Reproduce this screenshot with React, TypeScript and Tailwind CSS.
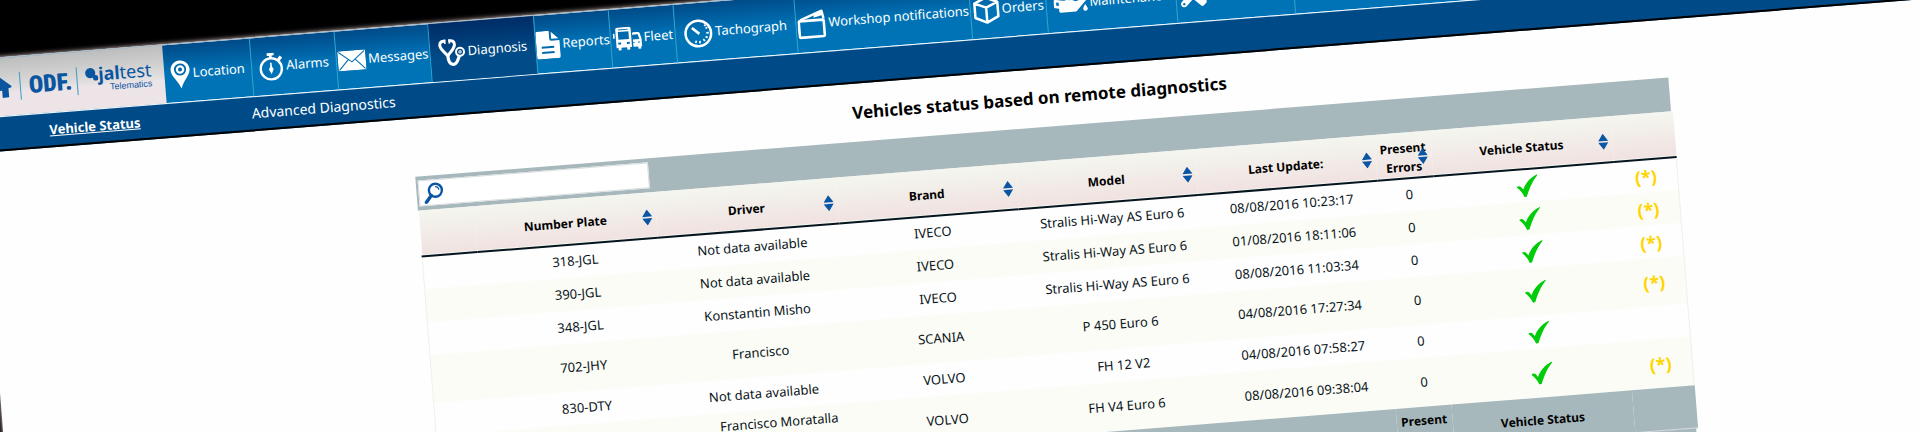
import type { ReactNode } from "react";
import { FaOilCan, FaTools } from "react-icons/fa";

type NavItem = { label: string; width: string; icon: ReactNode; active?: boolean; iconOnly?: boolean };

const PinIcon = () => (
  <svg width="20" height="29" viewBox="0 0 20 29" fill="none">
    <path d="M10 .5C4.6.5.5 4.600.5 9.800c0 5.800 6 9.700 9.500 18.700 3.500-9 9.500-12.900 9.500-18.700C19.500 4.600 15.400.5 10 .5z" fill="#fff" />
    <circle cx="10" cy="9.500" r="5.200" stroke="#0069ac" strokeWidth="1.800" />
    <circle cx="10" cy="9.500" r="2" fill="#0069ac" />
  </svg>
);

const StopwatchIcon = () => (
  <svg width="25" height="28" viewBox="0 0 25 28" fill="none" stroke="#fff">
    <circle cx="12" cy="16" r="10.600" strokeWidth="2.400" />
    <path d="M8.500 1.500h7M12 1.500v4" strokeWidth="2.600" />
    <path d="M19.500 8l3-3.500" strokeWidth="3.200" />
    <path d="M12 10v5" strokeWidth="1.600" />
    <path d="M12 12.500l2.400 4-2.400 5-2.400-5z" fill="#fff" stroke="none" />
  </svg>
);

const EnvelopeIcon = () => (
  <svg width="28" height="20" viewBox="0 0 28 20" fill="none">
    <rect width="28" height="20" rx="1.500" fill="#fff" />
    <path d="M1 1l13 10.500L27 1M1 19l9.500-10M27 19L17.500 9" stroke="#0072b5" strokeWidth="1.100" />
  </svg>
);

const StethoscopeIcon = () => (
  <svg width="27" height="28" viewBox="0 0 27 28" fill="none" stroke="#fff">
    <path d="M7.500 2.500C4 1.500 1.800 3 1.800 6c0 4 3.700 6.500 7.200 11 3.800-4.500 7.500-7 7.500-11 0-3-2.200-4.500-5.700-3.500" strokeWidth="3" />
    <path d="M7 .5v4.500M11.500.5v4.500" strokeWidth="1.600" />
    <path d="M9 16c0 6.500 1.500 10 5 10 4.500 0 4.500-5.500 7-8.500" strokeWidth="3.200" />
    <circle cx="21.500" cy="14" r="4" strokeWidth="2" />
    <circle cx="21.500" cy="14" r="1.200" strokeWidth="1" />
  </svg>
);

const ReportIcon = () => (
  <svg width="24" height="28" viewBox="0 0 25 29" fill="none">
    <path d="M2 0h12v8.500a2 2 0 0 0 2 2h8.500V27a2 2 0 0 1-2 2H2a2 2 0 0 1-2-2V2a2 2 0 0 1 2-2z" fill="#fff" />
    <path d="M16 1l7.500 7.500H16z" fill="#fff" />
    <path d="M5.500 17h13M5.500 22.500h13" stroke="#0069ac" strokeWidth="2.200" />
  </svg>
);

const FleetIcon = () => (
  <svg width="29" height="24" viewBox="0 0 30 24" fill="none">
    <path d="M5 0h12a2 2 0 0 1 2 2v19h-2v2.500h-3V21H8v2.500H5V21H3V2a2 2 0 0 1 2-2z" fill="#fff" />
    <path d="M1 6v5M21 7v3" stroke="#fff" strokeWidth="1.800" />
    <path d="M5.500 4.500h11v8h-11z" fill="#0069ac" />
    <path d="M6 2.300h10" stroke="#0069ac" strokeWidth="1" />
    <path d="M5 16.500h3M14 16.500h3" stroke="#0069ac" strokeWidth="2" />
    <path d="M20.500 6h5.500a2 2 0 0 1 2 1.500l1.500 5.500v8h-1v2.500h-3V21h-5z" fill="#fff" />
    <path d="M20.500 9h5l1 4h-6zM20.500 16.500h1.500M25.500 16.500h2" fill="#0069ac" stroke="#0069ac" strokeWidth="1" />
  </svg>
);

const TachographIcon = () => (
  <svg width="29" height="29" viewBox="0 0 29 29" fill="none" stroke="#fff">
    <circle cx="14.500" cy="14.500" r="12.800" strokeWidth="2.500" />
    <path d="M8.500 8.500l7 6.500" strokeWidth="2.600" />
    <path d="M22 10l2-1M22.500 14.500H25M21.500 18l2 1.200M19 20.500l1.500 2M15.500 22v2.500M12 21.500l-.8 2.300M21 7.500l1.300-1.200" strokeWidth="1.700" />
  </svg>
);

const WorkshopIcon = () => (
  <svg width="29" height="29" viewBox="0 0 29 29" fill="none" stroke="#fff">
    <rect x="1.500" y="10.500" width="25" height="16.500" rx="1" strokeWidth="2.600" />
    <path d="M3 9.500L25 1.500l1.500 8" strokeWidth="2.400" strokeLinejoin="round" />
    <path d="M17 5l8-3 .5 4-9 2z" fill="#fff" stroke="none" />
  </svg>
);

const BoxIcon = () => (
  <svg width="27" height="28" viewBox="0 0 27 28" fill="none" stroke="#fff" strokeWidth="2.500" strokeLinejoin="round">
    <path d="M13.500 1.500L25 6.500v14.500l-11.500 5.500L2 21V6.500zM2 6.500l11.500 5L25 6.500M13.500 11.500v15" />
  </svg>
);

const HomeIcon = () => (
  <svg width="26" height="22" viewBox="0 0 26 24" preserveAspectRatio="none" fill="#0a55a0">
    <path d="M13 0l13 12-1.500 1.500H22.500V24h-6.500v-8h-6v8H3.500V13.500H1.500L0 12z" />
  </svg>
);

const SearchIcon = () => (
  <svg width="20" height="21" viewBox="0 0 20 21" fill="none" stroke="#0b55a5">
    <circle cx="12" cy="8" r="6.500" strokeWidth="2.400" />
    <path d="M7.500 13L2 19.500" strokeWidth="3.400" strokeLinecap="round" />
    <path d="M12 4.500c2 0 3.300 1.300 3.500 3.300" strokeWidth="1.300" />
  </svg>
);

const SortIcon = () => (
  <svg width="10" height="16" viewBox="0 0 10 16" fill="#0b55a5">
    <path d="M5 0l5 7.200H0zM0 8.800h10L5 16z" />
  </svg>
);

const CheckIcon = () => (
  <svg width="22" height="22" viewBox="0 0 22 22" fill="#00cc0a" role="img" aria-label="OK">
    <path d="M0 11.500c1.800-1.400 3.600-1.200 4.600.2l1.900 2.600C9.300 8 14 3 21.500 0l.3.800C16.800 6 13 12.500 9.600 21.600L7.300 22C5.500 17.500 3.300 14 0 11.500z" />
  </svg>
);

const navItems: NavItem[] = [
  { label: "Location", width: "w-[88px]", icon: <PinIcon /> },
  { label: "Alarms", width: "w-[85px]", icon: <StopwatchIcon /> },
  { label: "Messages", width: "w-[94px]", icon: <EnvelopeIcon /> },
  { label: "Diagnosis", width: "w-[106px]", icon: <StethoscopeIcon />, active: true },
  { label: "Reports", width: "w-[75px]", icon: <ReportIcon /> },
  { label: "Fleet", width: "w-[65px]", icon: <FleetIcon /> },
  { label: "Tachograph", width: "w-[121px]", icon: <TachographIcon /> },
  { label: "Workshop notifications", width: "w-[175px]", icon: <WorkshopIcon /> },
  { label: "Orders", width: "w-[76px]", icon: <BoxIcon /> },
  { label: "Maintenance", width: "w-[130px]", icon: <FaOilCan size={34} /> },
  { label: "Tools", width: "w-[118px]", icon: <FaTools size={26} />, iconOnly: true },
];

type Vehicle = {
  plate: string;
  driver: string;
  brand: string;
  model: string;
  updated: string;
  note: boolean;
  height: string;
  driverCell?: string;
};

const vehicles: Vehicle[] = [
  { plate: "318-JGL", driver: "Not data available", brand: "IVECO", model: "Stralis Hi-Way AS Euro 6", updated: "08/08/2016 10:23:17", note: true, height: "h-[33px]" },
  { plate: "390-JGL", driver: "Not data available", brand: "IVECO", model: "Stralis Hi-Way AS Euro 6", updated: "01/08/2016 18:11:06", note: true, height: "h-[33px]" },
  { plate: "348-JGL", driver: "Konstantin Misho", brand: "IVECO", model: "Stralis Hi-Way AS Euro 6", updated: "08/08/2016 11:03:34", note: true, height: "h-[33px]" },
  { plate: "702-JHY", driver: "Francisco", brand: "SCANIA", model: "P 450 Euro 6", updated: "04/08/2016 17:27:34", note: true, height: "h-[48px]" },
  { plate: "830-DTY", driver: "Not data available", brand: "VOLVO", model: "FH 12 V2", updated: "04/08/2016 07:58:27", note: false, height: "h-[33px]" },
  {
    plate: "",
    driver: "Francisco Moratalla",
    brand: "VOLVO",
    model: "FH V4 Euro 6",
    updated: "08/08/2016 09:38:04",
    note: true,
    height: "h-[49px]",
    driverCell: "p-0 pt-1 pl-8 align-top",
  },
];

const columns = ["Number Plate", "Driver", "Brand", "Model", "Last Update:", "Present Errors", "Vehicle Status"];

function Brand() {
  return (
    <div className="flex w-[189px] shrink-0 items-center bg-linear-to-b from-[#bcbdbd] via-[#dedcdc] via-50% to-[#ece4e7] to-60% pl-2.5 text-[#0a55a0]">
      <a href="#home" aria-label="Home" className="shrink-0">
        <HomeIcon />
      </a>
      <span className="ml-2 h-7 w-px shrink-0 bg-[#3f9cc2]" />
      <span className="ml-2 w-10 shrink-0 font-['Roboto_Condensed','Liberation_Sans_Narrow',Roboto,sans-serif] text-2xl leading-6 font-black">
        ODF.
      </span>
      <span className="ml-2 h-7 w-px shrink-0 bg-[#3f9cc2]" />
      <span className="ml-2 flex shrink-0 flex-col items-end">
        <span className="flex items-center text-lg leading-4">
          <svg width="13" height="13" viewBox="0 0 14 14" fill="#0a55a0" className="shrink-0">
            <circle cx="5.500" cy="5.500" r="5.500" />
            <circle cx="11" cy="11" r="3" />
          </svg>
          <b>jal</b>test
        </span>
        <span className="font-['Liberation_Sans',sans-serif] text-[9px] leading-3">Telematics</span>
      </span>
    </div>
  );
}

export default function App() {
  return (
    <div className="h-screen overflow-hidden bg-black font-['Noto_Sans',sans-serif] text-[13px] text-[#0a1420]">
      <div className="origin-top-left -rotate-[4.53deg] pt-[57px]">
        <div className="-ml-[31px] bg-[#fefefe] pb-40 shadow-[0_0_5px_#f3dcd8]">
          <header>
            <nav aria-label="Main" className="flex h-[60px] border-t border-b border-t-[#9fb6c6] border-b-[#e8f8ff] bg-linear-to-b from-[#004a88] to-[#0073b6] to-50% text-white">
              <Brand />
              {navItems.map((item) => (
                <a
                  key={item.label}
                  href="#nav"
                  aria-label={item.label}
                  className={`flex shrink-0 items-center gap-0.5 border-r border-[#2fa5cf] pt-0.5 whitespace-nowrap ${item.width} ${
                    item.iconOnly ? "pl-1" : "justify-center"
                  } ${item.active ? "bg-linear-to-b from-[#002c66] to-[#004b88] to-60%" : ""}`}
                >
                  <span className="shrink-0">{item.icon}</span>
                  {!item.iconOnly && <span>{item.label}</span>}
                </a>
              ))}
            </nav>
            <nav aria-label="Diagnosis" className="flex h-[34px] items-center border-b-2 border-black bg-[#004b87] pl-[70px] text-sm text-white">
              <a href="#status" className="w-[203px] text-[13px] font-bold underline">
                Vehicle Status
              </a>
              <a href="#advanced">Advanced Diagnostics</a>
            </nav>
          </header>

          <main className="mr-[263px] ml-[431px]">
            <h1 className="flex h-[58px] items-center justify-center text-[17px] font-bold text-black">
              Vehicles status based on remote diagnostics
            </h1>
            <div className="flex h-[34px] items-center bg-[#a6b8bc] pl-0.5">
              <label className="flex h-[26px] w-[231px] items-center border border-[#d9dedf] bg-white pl-1">
                <SearchIcon />
                <input type="search" aria-label="Search" className="ml-1 min-w-0 flex-1 bg-transparent outline-none" />
              </label>
            </div>
            <table className="w-full table-fixed border-collapse text-center">
              <colgroup>
                <col className="w-[55px]" />
                <col className="w-[181px]" />
                <col className="w-[182px]" />
                <col className="w-[180px]" />
                <col className="w-[180px]" />
                <col className="w-[180px]" />
                <col className="w-[56px]" />
                <col className="w-[181px]" />
                <col className="w-[63px]" />
              </colgroup>
              <thead>
                <tr className="h-[46px] border-b-2 border-[#06141f] bg-linear-to-b from-[#f4f6ef] to-[#f0e2e1] text-xs text-black">
                  <td />
                  {columns.map((name) => (
                    <th key={name} className="p-0 pt-1">
                      <button type="button" className="relative flex w-full items-center justify-center leading-[19px] font-bold">
                        {name}
                        <span className="absolute right-1">
                          <SortIcon />
                        </span>
                      </button>
                    </th>
                  ))}
                  <td />
                </tr>
              </thead>
              <tbody>
                {vehicles.map((v) => (
                  <tr key={v.model + v.updated} className={`border-x border-[#f0efea] even:bg-[#fbfcf6] ${v.height}`}>
                    <td />
                    <td className="p-0 pl-3.5">{v.plate}</td>
                    <td className={v.driverCell ?? "p-0 pl-1.5"}>{v.driver}</td>
                    <td className="p-0 pl-1.5">{v.brand}</td>
                    <td className="p-0 pl-1.5">{v.model}</td>
                    <td className="p-0 pl-1.5">{v.updated}</td>
                    <td className="p-0 pl-1.5">0</td>
                    <td className="p-0 pl-1.5">
                      <span className="flex justify-center">
                        <CheckIcon />
                      </span>
                    </td>
                    <td className="p-0 text-lg leading-5 font-bold text-[#ffd500]">{v.note ? "(*)" : ""}</td>
                  </tr>
                ))}
              </tbody>
              <tfoot>
                <tr className="h-[42px] border-b border-[#d5dcdd] bg-[#a6b8bc] text-xs font-bold text-black">
                  <td colSpan={6} />
                  <td className="p-0 pt-1 leading-[19px]">Present Errors</td>
                  <td className="p-0 pt-1">Vehicle Status</td>
                  <td />
                </tr>
              </tfoot>
            </table>
            <div className="h-8 bg-[#a6b8bc]" />
          </main>
        </div>
      </div>
    </div>
  );
}
